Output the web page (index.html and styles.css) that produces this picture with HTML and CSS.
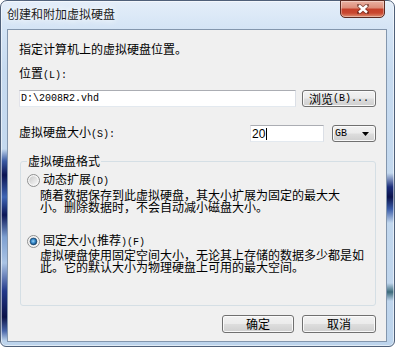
FILE: index.html
```html
<!DOCTYPE html>
<html lang="zh-CN">
<head>
<meta charset="utf-8">
<title>创建和附加虚拟硬盘</title>
<link rel="stylesheet" href="styles.css">
</head>
<body>
<div class="window">
  <div class="titlebar">
    <span class="title">创建和附加虚拟硬盘</span>
    <span class="close">
      <svg width="12" height="10" viewBox="0 0 12 10">
        <path d="M2 1.5 L10 8.5 M10 1.5 L2 8.5" stroke="#4b1d15" stroke-width="4.2" stroke-linecap="round" opacity=".55" fill="none"/>
        <path d="M2 1.5 L10 8.5 M10 1.5 L2 8.5" stroke="#ffffff" stroke-width="2.4" fill="none"/>
      </svg>
    </span>
  </div>
  <div class="client">
    <p class="intro">指定计算机上的虚拟硬盘位置。</p>
    <p class="label">位置<span class="en">(L):</span></p>
    <div class="row path-row">
      <div class="input path"><span class="en">D:\2008R2.vhd</span></div>
      <div class="btn browse">浏览<span class="en">(B)...</span></div>
    </div>
    <div class="row size-row">
      <span class="size-label">虚拟硬盘大小<span class="en">(S):</span></span>
      <div class="input size"><span class="num">20</span><span class="caret"></span></div>
      <div class="btn combo"><span class="en">GB</span>
        <svg width="7" height="4" viewBox="0 0 7 4"><polygon points="0,0 7,0 3.5,4" fill="#000"/></svg>
      </div>
    </div>
    <fieldset class="group">
      <legend>虚拟硬盘格式</legend>
      <div class="radio-row">
        <svg class="radio" width="13" height="13" viewBox="0 0 13 13">
          <defs><linearGradient id="ru1" x1="0" y1="0" x2="1" y2="1"><stop offset="0" stop-color="#c9c9c9"/><stop offset="1" stop-color="#f8f8f8"/></linearGradient></defs>
          <circle cx="6.5" cy="6.5" r="6" fill="#f6f6f6" stroke="#8e8f8f"/>
          <circle cx="6.5" cy="6.5" r="4.3" fill="url(#ru1)"/>
        </svg>
        <span>动态扩展<span class="en">(D)</span></span>
      </div>
      <p class="desc">随着数据保存到此虚拟硬盘，其大小扩展为固定的最大大<br>小。删除数据时，不会自动减小磁盘大小。</p>
      <div class="radio-row second">
        <svg class="radio" width="13" height="13" viewBox="0 0 13 13">
          <defs>
            <linearGradient id="ru2" x1="0" y1="0" x2="1" y2="1"><stop offset="0" stop-color="#c9c9c9"/><stop offset="1" stop-color="#f8f8f8"/></linearGradient>
            <radialGradient id="rc2" cx="0.45" cy="0.45" r="0.6"><stop offset="0" stop-color="#9fd6f7"/><stop offset="0.45" stop-color="#3b8fd0"/><stop offset="1" stop-color="#0c3560"/></radialGradient>
          </defs>
          <circle cx="6.5" cy="6.5" r="6" fill="#f6f6f6" stroke="#8e8f8f"/>
          <circle cx="6.5" cy="6.5" r="4.3" fill="url(#ru2)"/>
          <circle cx="6.5" cy="6.5" r="3.4" fill="url(#rc2)" stroke="#16456d" stroke-width=".6"/>
        </svg>
        <span>固定大小<span class="en">(</span>推荐<span class="en">)(F)</span></span>
      </div>
      <p class="desc second">虚拟硬盘使用固定空间大小，无论其上存储的数据多少都是如<br>此。它的默认大小为物理硬盘上可用的最大空间。</p>
    </fieldset>
    <div class="actions">
      <div class="btn ok">确定</div>
      <div class="btn cancel">取消</div>
    </div>
  </div>
</div>
</body>
</html>
```

FILE: styles.css
```css
* { box-sizing: border-box; }
html, body { margin: 0; padding: 0; }
body {
  width: 395px;
  height: 347px;
  overflow: hidden;
  background: #ffffff;
  font-family: "Noto Sans CJK SC", sans-serif;
  font-size: 12px;
  line-height: 12px;
  color: #000;
}
p { margin: 0; }
.en {
  font-family: "Liberation Mono", monospace;
  font-size: 10px;
}
.window {
  width: 395px;
  height: 347px;
  border: 1px solid #4f6079;
  border-radius: 7px 7px 6px 6px;
  padding: 0 7px 4px 6px;
  display: flex;
  flex-direction: column;
  background:
    linear-gradient(180deg, transparent 148px, #3a5aa2 160px, #0b1452 174px, #3f66b5 196px, #0c1757 214px, #7d9fd0 236px, #aac4e5 262px, #23398a 290px, #0a1247 316px, #4a66a8 330px, transparent 340px) left top / 6px 100% no-repeat,
    linear-gradient(180deg, transparent 172px, #1b2d7a 186px, #0a124c 196px, #3a5ca8 208px, transparent 222px, transparent 282px, #3b6a7a 291px, transparent 300px) right top / 7px 100% no-repeat,
    linear-gradient(180deg, #e4eef9 0, #d4e4f5 28px, #c7dbf0 70px, #bdd4ec 100%);
  box-shadow: inset 0 0 0 1px rgba(255,255,255,.55);
}
.titlebar {
  height: 28px;
  flex: none;
  display: flex;
  align-items: flex-start;
}
.title {
  margin-top: 7px;
  white-space: nowrap;
  color: #1b1b1b;
  text-shadow: 0 0 6px rgba(255,255,255,.95), 0 0 10px rgba(255,255,255,.8);
}
.close {
  margin-left: auto;
  margin-top: -1px;
  margin-right: 2px;
  width: 45px;
  height: 18px;
  border: 1px solid #5b2a21;
  border-radius: 0 0 5px 5px;
  background: linear-gradient(180deg, #eab1a2 0%, #dd8e7b 42%, #c5402a 52%, #c9472f 75%, #de8f72 100%);
  box-shadow: inset 0 0 0 1px rgba(255,255,255,.35);
  display: flex;
  align-items: center;
  justify-content: center;
}
.close svg { display: block; }
.client {
  flex: 1;
  border: 1px solid #8396ad;
  background: #f0f0f0;
  padding: 0 10px 0 11px;
  display: flex;
  flex-direction: column;
}
.intro { margin-top: 13px; }
.label { margin-top: 12px; }
.row { display: flex; align-items: center; }
.path-row { margin-top: 8px; gap: 6px; }
.input {
  height: 17px;
  background: #fff;
  border: 1px solid;
  border-color: #abadb3 #dbdfe6 #e3e9ef #e2e3ea;
  padding-left: 1px;
  display: flex;
  align-items: center;
}
.path { width: 277px; }
.btn {
  height: 17px;
  border: 1px solid #707070;
  border-radius: 3px;
  background: linear-gradient(180deg, #f2f2f2 0%, #ebebeb 48%, #dddddd 52%, #cfcfcf 100%);
  box-shadow: inset 0 0 0 1px rgba(252,252,252,.9);
  display: flex;
  align-items: center;
  justify-content: center;
  white-space: nowrap;
}
.browse { width: 74px; }
.size-row { margin-top: 18px; }
.size-label { margin-right: auto; }
.size { width: 74px; }
.num {
  font-family: "Liberation Sans", sans-serif;
  font-size: 12px;
}
.caret {
  width: 1px;
  height: 12px;
  background: #000;
  margin-left: 1px;
}
.combo {
  width: 44px;
  margin-left: 8px;
  justify-content: space-between;
  padding: 0 6px 0 2px;
}
.combo svg { display: block; }
.group {
  margin: 13px 0 0 1px;
  padding: 0 0 32px;
  border: 1px solid #d5dfe5;
  border-radius: 3px;
  min-width: 0;
}
.group legend {
  margin-left: 6px;
  padding: 0 1px;
  line-height: 12px;
}
.radio-row {
  display: flex;
  align-items: center;
  gap: 3px;
  height: 13px;
  margin: 7px 0 0 6px;
}
.radio { display: block; flex: none; }
.desc {
  margin: 2px 0 0 19px;
  white-space: nowrap;
}
.radio-row.second { margin-top: 22px; }
.desc.second { margin-top: 1px; }
.actions {
  margin-top: 9px;
  display: flex;
  justify-content: flex-end;
  gap: 8px;
}
.actions .btn { height: 18px; }
.ok { width: 72px; }
.cancel { width: 74px; }
```
